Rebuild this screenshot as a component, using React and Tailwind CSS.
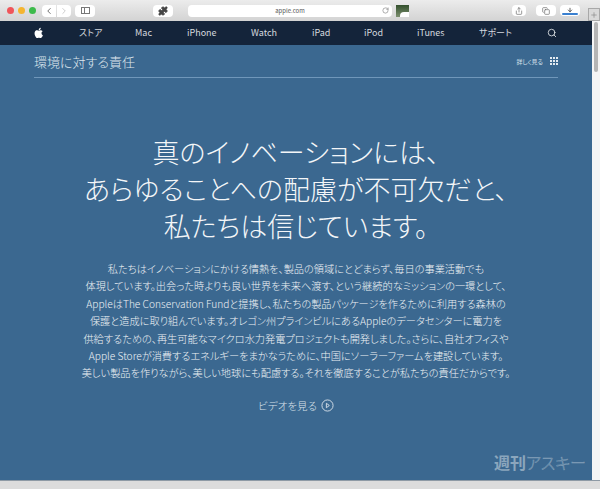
import { ChevronLeft, ChevronRight, RotateCw, Search, Share, Copy, Plus, ArrowDown, Puzzle } from 'lucide-react'

const cjk = { fontFamily: '"Noto Sans CJK JP", "Noto Sans", sans-serif' }

const navItems = [
  { label: 'ストア', width: 'w-[20px]' },
  { label: 'Mac', width: 'w-[16px]' },
  { label: 'iPhone', width: 'w-[28px]' },
  { label: 'Watch', width: 'w-[25px]' },
  { label: 'iPad', width: 'w-[16px]' },
  { label: 'iPod', width: 'w-[17px]' },
  { label: 'iTunes', width: 'w-[26px]' },
  { label: 'サポート', width: 'w-[28px]' },
]

const bodyLines = [
  '私たちはイノベーションにかける情熱を、製品の領域にとどまらず、毎日の事業活動でも',
  '体現しています。出会った時よりも良い世界を未来へ渡す、という継続的なミッションの一環として、',
  'AppleはThe Conservation Fundと提携し、私たちの製品パッケージを作るために利用する森林の',
  '保護と造成に取り組んでいます。オレゴン州プラインビルにあるAppleのデータセンターに電力を',
  '供給するための、再生可能なマイクロ水力発電プロジェクトも開発しました。さらに、自社オフィスや',
  'Apple Storeが消費するエネルギーをまかなうために、中国にソーラーファームを建設しています。',
  '美しい製品を作りながら、美しい地球にも配慮する。それを徹底することが私たちの責任だからです。',
]

const AppleLogo = ({ className }) => (
  <svg viewBox="0 0 24 24" className={className} fill="currentColor">
    <path d="M17.05 12.54c-.03-2.6 2.12-3.85 2.22-3.91-1.21-1.77-3.09-2.01-3.76-2.04-1.6-.16-3.12.94-3.93.94-.81 0-2.06-.92-3.39-.89-1.74.03-3.35 1.01-4.25 2.57-1.81 3.14-.46 7.79 1.3 10.34.86 1.25 1.89 2.65 3.24 2.6 1.3-.05 1.79-.84 3.36-.84 1.57 0 2.01.84 3.39.81 1.4-.02 2.28-1.27 3.14-2.53.99-1.45 1.4-2.86 1.42-2.93-.03-.01-2.72-1.04-2.74-4.12zM14.47 4.9c.72-.87 1.2-2.08 1.07-3.28-1.03.04-2.28.69-3.02 1.55-.66.77-1.24 2-1.09 3.18 1.15.09 2.32-.58 3.04-1.45z" />
  </svg>
)

const Toolbar = () => (
  <div className="h-[21px] flex items-center pl-[7px] bg-gradient-to-b from-[#ececec] to-[#d3d3d3] relative">
    <div className="flex gap-[4px] w-[35px]">
      <span className="w-[7px] h-[7px] rounded-full bg-[#f0555a]" />
      <span className="w-[7px] h-[7px] rounded-full bg-[#f5b52f]" />
      <span className="w-[7px] h-[7px] rounded-full bg-[#3dbb4b]" />
    </div>
    <div className="flex gap-px">
      <span className="w-[14px] h-[12px] bg-white rounded-l-sm flex items-center justify-center text-[#555555]">
        <ChevronLeft size={10} />
      </span>
      <span className="w-[14px] h-[12px] bg-white rounded-r-sm flex items-center justify-center text-[#c4c4c4]">
        <ChevronRight size={10} />
      </span>
    </div>
    <span className="w-[20px] h-[12px] bg-white rounded-sm ml-[4px] flex items-center justify-center">
      <span className="w-[9px] h-[7px] border border-[#777777] flex">
        <span className="w-[3px] border-r border-[#777777]" />
      </span>
    </span>
    <span className="w-[20px] h-[12px] bg-white rounded-sm ml-[58px] flex items-center justify-center text-[#444444]">
      <Puzzle size={10} fill="currentColor" />
    </span>
    <div className="w-[204px] h-[12px] bg-white rounded-sm ml-[15px] flex items-center justify-center relative">
      <span className="text-[6px] text-[#555555]" style={cjk}>apple.com</span>
      <RotateCw size={7} className="absolute right-[3px] text-[#777777]" />
    </div>
    <span className="w-[13px] h-[12px] ml-[4px] bg-gradient-to-b from-[#34512e] to-[#7d9070] flex items-end justify-end">
      <span className="w-[9px] h-[5px] bg-white rounded-tl-sm" />
    </span>
    <span className="w-[14px] h-[11px] bg-white rounded-sm ml-[103px] flex items-center justify-center text-[#666666]">
      <Share size={8} />
    </span>
    <span className="w-[20px] h-[11px] bg-white rounded-sm ml-[10px] flex items-center justify-center text-[#666666]">
      <Copy size={8} />
    </span>
    <span className="w-[20px] h-[11px] bg-white rounded-sm ml-[4px] flex flex-col items-center justify-end pb-[1px]">
      <ArrowDown size={6} strokeWidth={3} className="text-[#333333]" />
      <span className="w-[16px] h-[2px] bg-[#3a80d0] rounded-full" />
    </span>
    <span className="absolute right-0 top-[8px] w-[12px] h-[13px] bg-[#d9d9d9] border border-[#a8a8a8] flex items-center justify-center text-[#888888]">
      <Plus size={8} />
    </span>
  </div>
)

const NavBar = () => (
  <nav className="h-[24px] bg-[#14243a] flex items-center text-[#d4d9df] text-[9px] [font-feature-settings:'palt']" style={cjk}>
    <AppleLogo className="w-[12px] h-[12px] text-white ml-[33px] mr-[34px]" />
    <div className="flex items-center gap-[36px]">
      {navItems.map((item) => (
        <span key={item.label} className={`${item.width} whitespace-nowrap`}>
          {item.label}
        </span>
      ))}
    </div>
    <Search size={10} className="ml-[40px] text-[#e6e9ec]" />
  </nav>
)

const Hero = () => (
  <main className="flex-1 bg-[#3b6890] text-white overflow-hidden relative [font-feature-settings:'palt']" style={cjk}>
    <div className="mx-[34px] h-[33px] flex items-center justify-between border-b border-[#7097ba]">
      <h2 className="text-[13px] font-light text-[#dfe7ee] leading-none [font-feature-settings:'normal']">環境に対する責任</h2>
      <div className="flex items-center gap-[7px]">
        <span className="text-[6px] text-[#d6e0ea]">詳しく見る</span>
        <div className="grid grid-cols-3 gap-px">
          {Array.from({ length: 9 }).map((_, i) => (
            <span key={i} className="w-[2px] h-[2px] bg-[#e3eaf0]" />
          ))}
        </div>
      </div>
    </div>
    <h1 className="mt-[55px] text-center font-light text-[27px] leading-[37px] text-[#f4f6f8]">
      真のイノベーションには、<br />
      あらゆることへの配慮が不可欠だと、<br />
      私たちは信じています。
    </h1>
    <div className="mt-[16px] text-center text-[10.2px] leading-[17.4px] font-light text-[#eef2f5] whitespace-nowrap">
      {bodyLines.map((line) => (
        <p key={line}>{line}</p>
      ))}
    </div>
    <div className="mt-[16px] flex items-center justify-center gap-[4px] text-[10.5px] text-[#d9e2ea] font-light">
      <span>ビデオを見る</span>
      <svg viewBox="0 0 14 14" className="w-[13px] h-[13px]" fill="none" stroke="currentColor">
        <circle cx="7" cy="7" r="6" />
        <path d="M5.8 4.6 L9 7 L5.8 9.4 Z" />
      </svg>
    </div>
    <div className="absolute right-[6px] bottom-[7px] flex items-center text-[16px] leading-[22px] font-bold text-[#8ba6bd] [font-feature-settings:'normal']">
      <span>週刊</span>
      <span className="font-light text-transparent [-webkit-text-stroke:0.5px_#86a2ba]">アスキー</span>
    </div>
  </main>
)

const App = () => {
  return (
    <div className="w-[600px] h-[489px] flex flex-col bg-[#d9d9d9] overflow-hidden">
      <Toolbar />
      <div className="flex-1 flex min-h-0">
        <div className="flex-1 flex flex-col min-w-0">
          <NavBar />
          <Hero />
        </div>
        <aside className="w-[8px] bg-[#f5f5f5] pt-[1px] flex justify-center">
          <span className="w-[4px] h-[50px] bg-[#b5b5b5] rounded-full" />
        </aside>
      </div>
      <div className="h-[9px] bg-[#dcdcdc] border-t border-[#8e9aa5]" />
    </div>
  )
}

export default App
